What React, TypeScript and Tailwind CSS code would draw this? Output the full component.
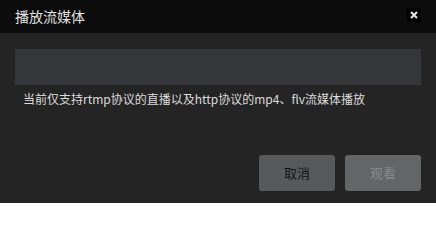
export default function App() {
  const font = { fontFamily: '"Microsoft YaHei", "Noto Sans CJK SC", "Noto Sans", sans-serif' };
  return (
    <div className="w-[436px] h-[203px] bg-[#242424] flex flex-col" style={font}>
      <div className="h-[33px] bg-[#0c0c0c] flex items-center justify-between pl-[15px] pr-[15px]">
        <span className="text-[14px] leading-[16px] text-[#e2e2e2] mt-[-2px]">播放流媒体</span>
        <div className="w-[14px] h-[14px] bg-black rounded-[2px] flex items-center justify-center mt-[-3px]">
          <svg width="8" height="8" viewBox="0 0 8 8">
            <path d="M1 1L7 7M7 1L1 7" stroke="#e6e6e6" strokeWidth="2" />
          </svg>
        </div>
      </div>
      <div className="px-[15px] pt-[16px]">
        <div className="h-[36px] bg-[#35363a]" />
        <div className="pl-[8px] pt-[6px] text-[12px] leading-[16px] text-[#dcdcdc]">
          当前仅支持rtmp协议的直播以及http协议的mp4、flv流媒体播放
        </div>
        <div className="flex justify-end gap-[10px] mt-[48px]">
          <div className="w-[76px] h-[36px] bg-[#58595b] rounded-[3px] flex items-center justify-center text-[13px] text-[#141414]">取消</div>
          <div className="w-[76px] h-[36px] bg-[#646567] rounded-[3px] flex items-center justify-center text-[13px] text-[#8a8a8a]">观看</div>
        </div>
      </div>
    </div>
  );
}
